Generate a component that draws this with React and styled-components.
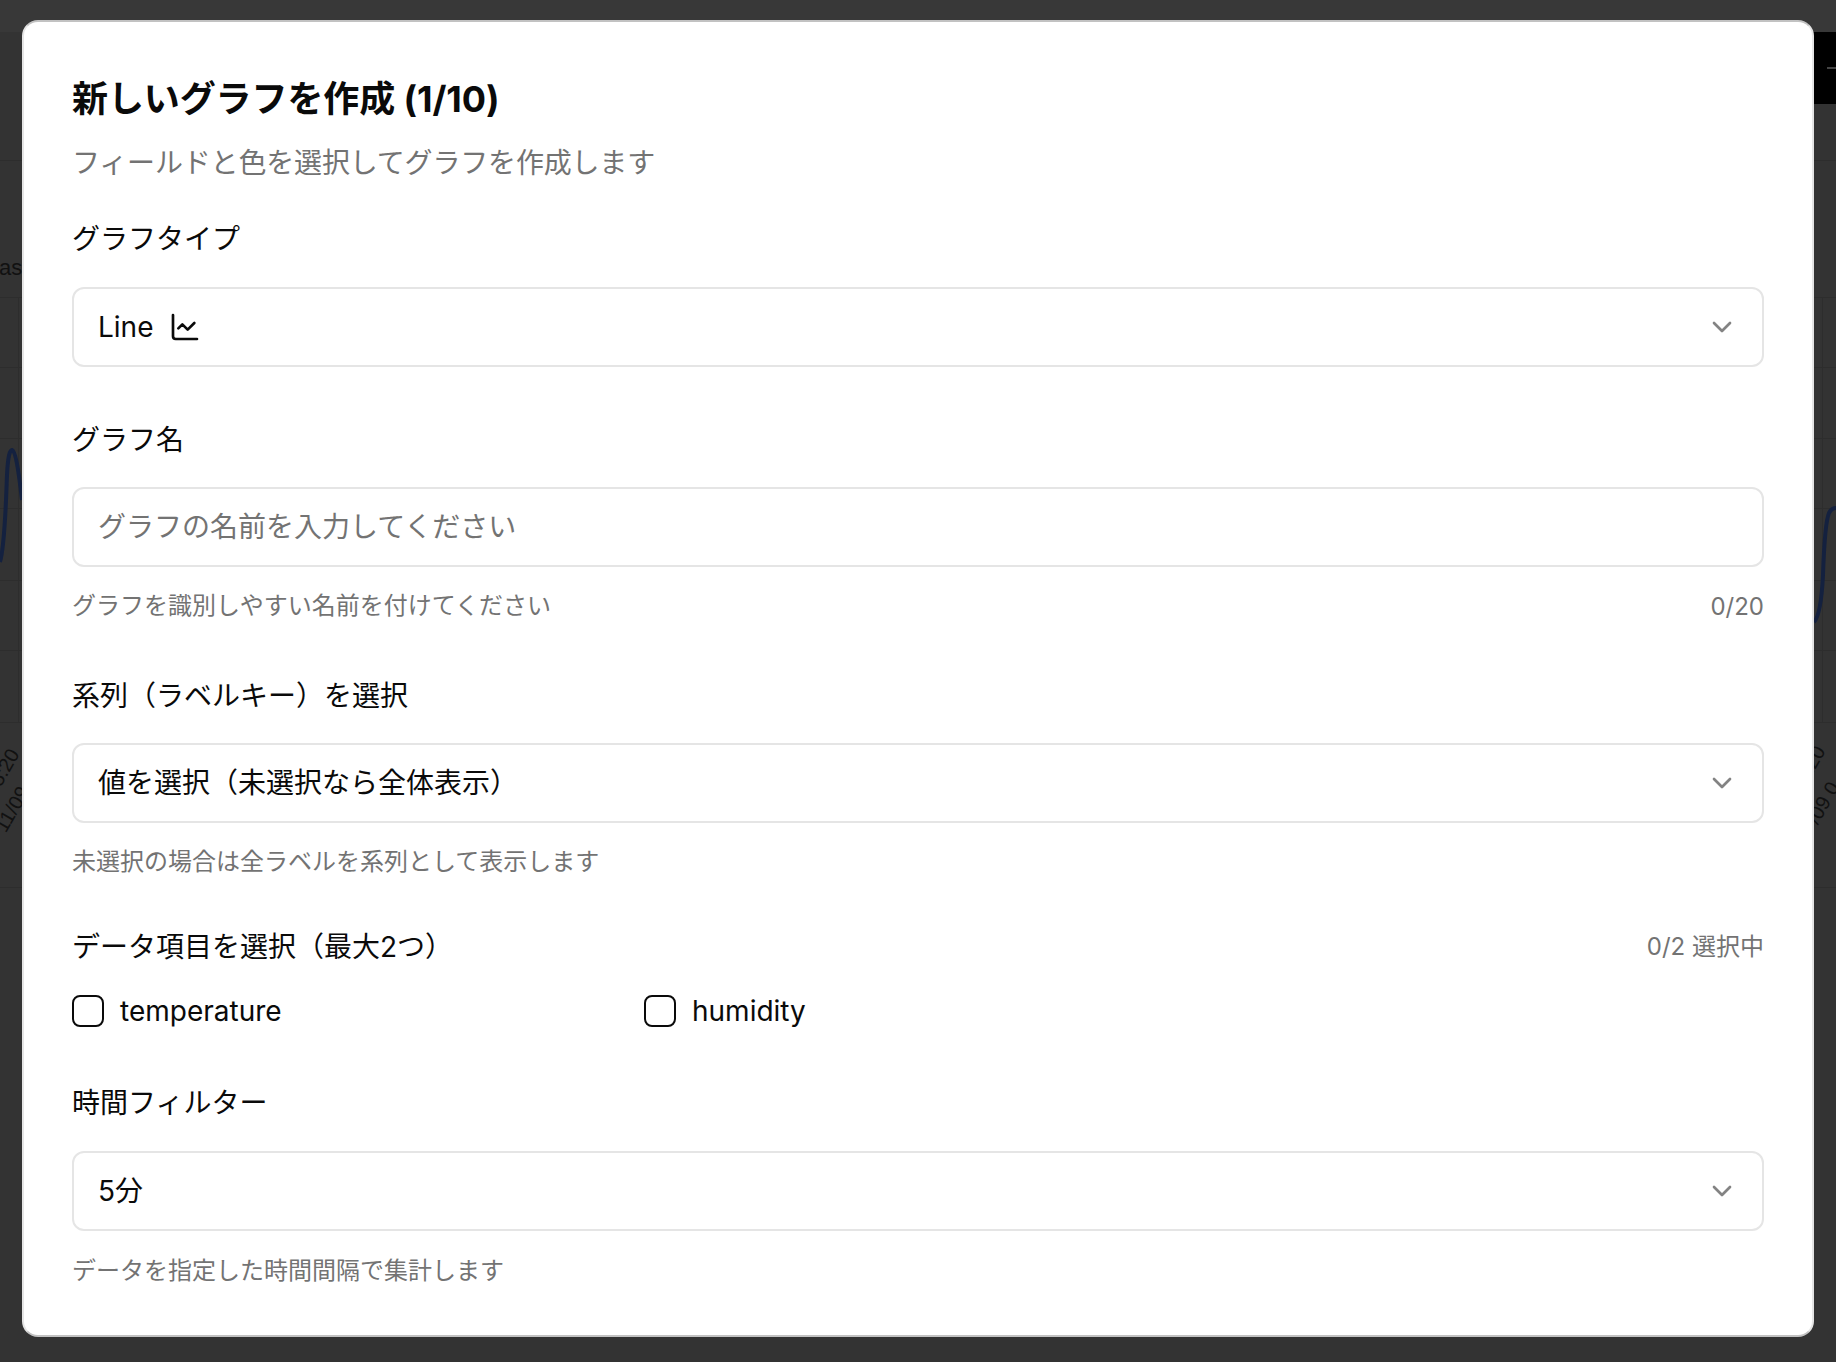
import React from "react";
import styled, { createGlobalStyle } from "styled-components";
import { ChartLine, ChevronDown } from "lucide-react";

const GlobalStyle = createGlobalStyle`
  html, body {
    margin: 0;
    padding: 0;
    background: #333333;
  }
  * {
    box-sizing: border-box;
  }
`;

const FONT = `Inter, "Noto Sans CJK JP", sans-serif`;
const MUTED = "#737373";
const INK = "#0a0a0a";

const Page = styled.div`
  position: relative;
  width: 1836px;
  height: 1362px;
  padding: 20px 22px 25px;
  overflow: hidden;
  background: #333333;
  font-family: ${FONT};
`;

/* what is left visible of the dimmed page behind the dialog */
const TopStrip = styled.div`
  position: absolute;
  top: 0;
  left: 0;
  right: 0;
  height: 32px;
  background: #383838;
`;
const BlackBar = styled.div`
  position: absolute;
  top: 32px;
  right: 0;
  width: 40px;
  height: 72px;
  background: #000;
  &::after {
    content: "";
    position: absolute;
    top: 35px;
    right: 0;
    width: 9px;
    height: 2px;
    background: #444;
  }
`;
const GridLine = styled.div`
  position: absolute;
  left: 0;
  right: 0;
  top: ${(p) => p.$y}px;
  height: 1px;
  background: #2d2d2d;
`;
const GridColumn = styled.div`
  position: absolute;
  left: ${(p) => p.$x}px;
  top: 297px;
  height: 425px;
  width: 1px;
  background: #2d2d2d;
`;
const BehindChart = styled.svg`
  position: absolute;
  top: 0;
  left: 0;
`;
const BehindText = styled.span`
  position: absolute;
  left: ${(p) => p.$x}px;
  top: ${(p) => p.$y}px;
  color: #111;
  font-family: "Liberation Sans", sans-serif;
  font-size: ${(p) => (p.$tilt ? 20 : 22)}px;
  line-height: 20px;
  white-space: nowrap;
  transform: ${(p) => (p.$tilt ? "rotate(-60deg)" : "none")};
  transform-origin: left top;
`;

const Dialog = styled.div`
  position: relative;
  height: 1317px;
  padding: 49px 48px 0;
  background: #fff;
  border: 2px solid #e5e5e5;
  border-top-color: #c2c2c2;
  border-bottom-color: #c2c2c2;
  border-radius: 16px;
`;
const Title = styled.h2`
  margin: 0;
  color: ${INK};
  font-size: 36px;
  font-weight: 700;
  line-height: 56px;
  letter-spacing: -0.1px;
`;
const Subtitle = styled.p`
  margin: 16px 0 0;
  color: ${MUTED};
  font-size: 28px;
  line-height: 40px;
  letter-spacing: -0.17px;
`;
const Field = styled.section`
  margin-top: ${(p) => p.$top}px;
`;
const LabelRow = styled.div`
  display: flex;
  justify-content: space-between;
  align-items: center;
`;
const Label = styled.label`
  display: block;
  color: ${INK};
  font-size: 28px;
  line-height: 40px;
`;
const Counter = styled.span`
  color: ${MUTED};
  font-size: 24px;
  line-height: 32px;
`;
const SelectBox = styled.button`
  display: flex;
  align-items: center;
  justify-content: space-between;
  width: 100%;
  height: 80px;
  margin-top: ${(p) => p.$gap}px;
  padding: 0 24px;
  background: #fff;
  border: 2px solid #e5e5e5;
  border-radius: 12px;
  color: ${INK};
  font-family: ${FONT};
  font-size: 28px;
  line-height: 40px;
`;
const SelectValue = styled.span`
  display: flex;
  align-items: center;
  gap: 16px;
`;
const Chevron = styled(ChevronDown)`
  opacity: 0.5;
  color: ${INK};
`;
const TextInput = styled.input`
  display: block;
  width: 100%;
  height: 80px;
  margin-top: 27px;
  padding: 0 24px;
  background: #fff;
  border: 2px solid #e5e5e5;
  border-radius: 12px;
  color: ${INK};
  font-family: ${FONT};
  font-size: 28px;
  outline: none;
  &::placeholder {
    color: ${MUTED};
    opacity: 1;
  }
`;
const Help = styled.p`
  margin: 0;
  color: ${MUTED};
  font-size: 24px;
  line-height: 32px;
`;
const HelpRow = styled.div`
  display: flex;
  justify-content: space-between;
  align-items: center;
  margin-top: ${(p) => p.$top}px;
  ${Counter} {
    padding-top: 2px;
  }
`;
const CheckGrid = styled.div`
  display: grid;
  grid-template-columns: repeat(3, 1fr);
  column-gap: 24px;
  margin-top: 28px;
`;
const CheckItem = styled.div`
  display: flex;
  align-items: center;
  gap: 16px;
  height: 32px;
  color: ${INK};
  font-size: 28px;
  line-height: 32px;
`;
const CheckBox = styled.span`
  flex: none;
  width: 32px;
  height: 32px;
  border: 2px solid ${INK};
  border-radius: 8px;
`;

const Select = ({ gap, children }) => (
  <SelectBox type="button" $gap={gap}>
    <SelectValue>{children}</SelectValue>
    <Chevron size={32} />
  </SelectBox>
);

export default function App() {
  return (
    <Page>
      <GlobalStyle />
      <TopStrip />
      <BlackBar />
      {[160, 297, 367, 438, 508, 580, 650, 722, 887].map((y) => (
        <GridLine key={y} $y={y} />
      ))}
      <GridColumn $x={18} />
      <GridColumn $x={1822} />
      <BehindChart width="1836" height="1362" fill="none" stroke="#14213f" strokeWidth="4">
        <path d="M0 562 C5 545 6 500 7 475 C8 455 10 450 12 450 C15 451 18 465 22 500" />
        <path d="M1814 622 C1820 616 1822 595 1823 575 C1824 545 1826 520 1829 513 C1831 509 1833 508 1836 508" />
      </BehindChart>
      <BehindText $x={-1} $y={258}>asp</BehindText>
      <BehindText $x={-14} $y={779} $tilt>5:20</BehindText>
      <BehindText $x={-9} $y={825} $tilt>11/09</BehindText>
      <BehindText $x={1792} $y={776} $tilt>5:20</BehindText>
      <BehindText $x={1803} $y={817} $tilt>/09 0</BehindText>

      <Dialog>
        <Title>新しいグラフを作成 (1/10)</Title>
        <Subtitle>フィールドと色を選択してグラフを作成します</Subtitle>

        <Field $top={36}>
          <Label>グラフタイプ</Label>
          <Select gap={28}>
            Line <ChartLine size={32} />
          </Select>
        </Field>

        <Field $top={53}>
          <Label>グラフ名</Label>
          <TextInput placeholder="グラフの名前を入力してください" />
          <HelpRow $top={22}>
            <Help>グラフを識別しやすい名前を付けてください</Help>
            <Counter>0/20</Counter>
          </HelpRow>
        </Field>

        <Field $top={53}>
          <Label>系列（ラベルキー）を選択</Label>
          <Select gap={27}>値を選択（未選択なら全体表示）</Select>
          <HelpRow $top={23}>
            <Help>未選択の場合は全ラベルを系列として表示します</Help>
          </HelpRow>
        </Field>

        <Field $top={49}>
          <LabelRow>
            <Label>データ項目を選択（最大2つ）</Label>
            <Counter>0/2 選択中</Counter>
          </LabelRow>
          <CheckGrid>
            <CheckItem>
              <CheckBox />
              temperature
            </CheckItem>
            <CheckItem>
              <CheckBox />
              humidity
            </CheckItem>
          </CheckGrid>
        </Field>

        <Field $top={56}>
          <Label>時間フィルター</Label>
          <Select gap={28}>5分</Select>
          <HelpRow $top={24}>
            <Help>データを指定した時間間隔で集計します</Help>
          </HelpRow>
        </Field>
      </Dialog>
    </Page>
  );
}
